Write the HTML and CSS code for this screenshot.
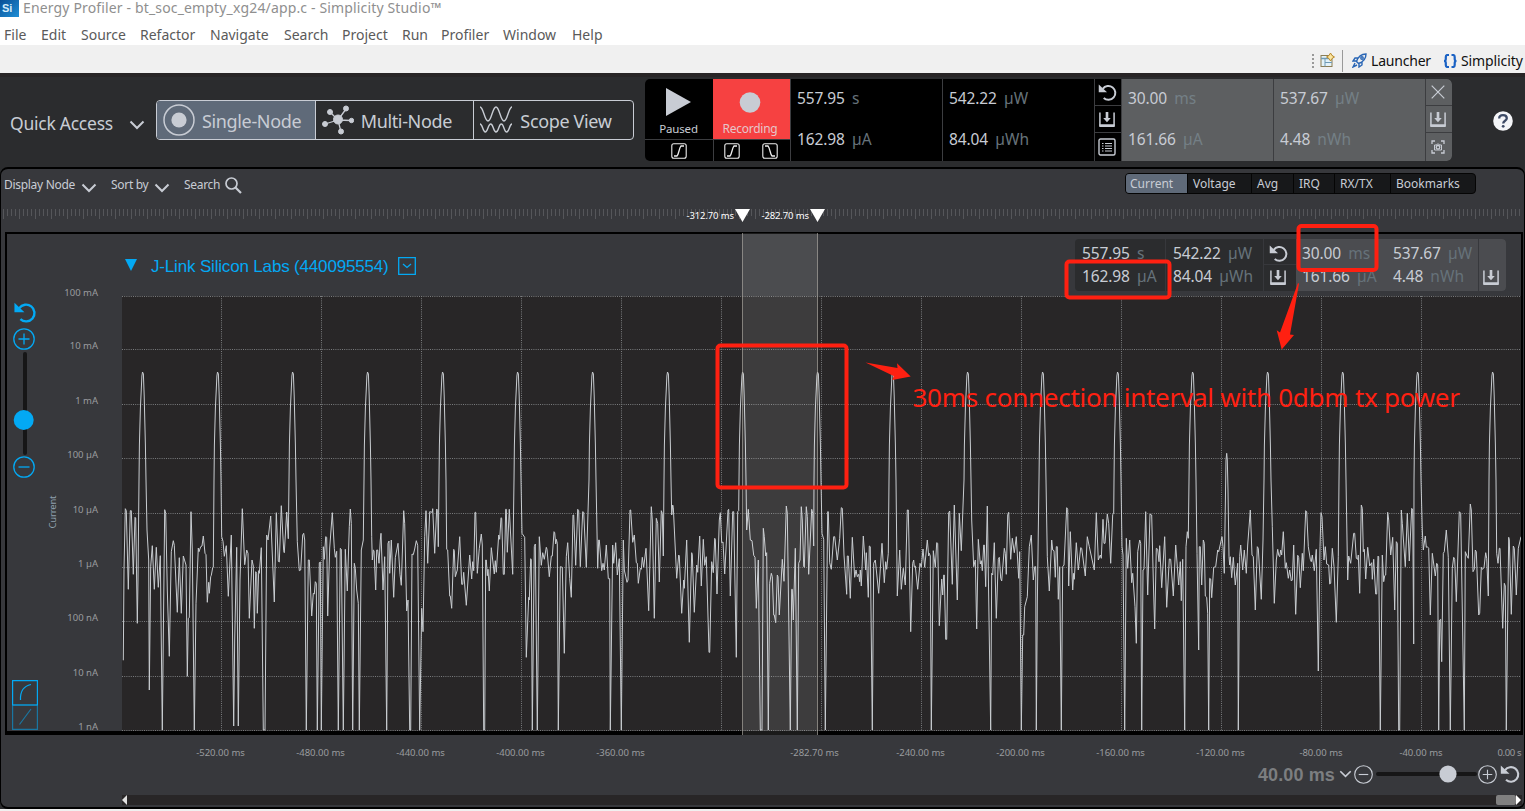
FILE: index.html
```html
<!DOCTYPE html>
<html lang="en">
<head>
<meta charset="utf-8">
<title>Energy Profiler</title>
<link rel="stylesheet" href="styles.css">
</head>
<body>
<svg class="defs" aria-hidden="true">
  <symbol id="chev" viewBox="0 0 16 10"><path d="M1.5 1.5L8 8L14.5 1.5" fill="none" stroke="currentColor" stroke-width="2"/></symbol>
  <symbol id="undo" viewBox="0 0 20 20"><path d="M5 6.200A7.300 7.300 0 1 1 6 15.800" fill="none" stroke="currentColor" stroke-width="2.100"/><path d="M.8 1.500V9.800H9.500Z" fill="currentColor"/></symbol>
  <symbol id="save" viewBox="0 0 18 18"><path d="M1.5 1.5V15.5H16.5V1.5" fill="none" stroke="currentColor" stroke-width="1.6"/><path d="M1 14H17V17H1ZM7.600 1H10.400V7.500H13L9 12L5 7.500H7.600Z" fill="currentColor"/></symbol>
  <symbol id="list" viewBox="0 0 18 18"><rect x="1" y="1" width="16" height="16" rx="1.5" fill="none" stroke="currentColor" stroke-width="1.4"/><path d="M4 5.5H5.5M4 8H5.5M4 10.5H5.5M4 13H5.5M7 5.5H14M7 8H14M7 10.5H14M7 13H14" stroke="currentColor" stroke-width="1.1"/></symbol>
  <symbol id="rise" viewBox="0 0 16 16"><rect x=".8" y=".8" width="14.4" height="14.4" rx="2" fill="none" stroke="currentColor" stroke-width="1.1"/><path d="M3 13H6C8 11 8 5 10 3H13" fill="none" stroke="currentColor" stroke-width="1.3"/></symbol>
  <symbol id="fall" viewBox="0 0 16 16"><rect x=".8" y=".8" width="14.4" height="14.4" rx="2" fill="none" stroke="currentColor" stroke-width="1.1"/><path d="M3 3H6C8 5 8 11 10 13H13" fill="none" stroke="currentColor" stroke-width="1.3"/></symbol>
  <symbol id="plus" viewBox="0 0 22 22"><circle cx="11" cy="11" r="10.2" fill="none" stroke="currentColor" stroke-width="1.3"/><path d="M5.5 11H16.5M11 5.5V16.5" stroke="currentColor" stroke-width="1.3"/></symbol>
  <symbol id="minus" viewBox="0 0 22 22"><circle cx="11" cy="11" r="10.2" fill="none" stroke="currentColor" stroke-width="1.3"/><path d="M5.5 11H16.5" stroke="currentColor" stroke-width="1.3"/></symbol>
</svg>

<header class="titlebar">
  <svg class="logo" width="19" height="17" viewBox="0 0 19 17"><defs><linearGradient id="lg" x2="1" y2="1"><stop offset="0" stop-color="#0a4f96"/><stop offset="1" stop-color="#1f8fd6"/></linearGradient></defs><path d="M0 0H19V17H0Z" fill="url(#lg)"/><text x="2" y="12" class="logo-text">Si</text></svg>
  <span class="app-title">Energy Profiler - bt_soc_empty_xg24/app.c - Simplicity Studio™</span>
</header>
<nav class="menu">
  <span class="m1">File</span><span class="m2">Edit</span><span class="m3">Source</span><span class="m4">Refactor</span><span class="m5">Navigate</span><span class="m6">Search</span><span class="m7">Project</span><span class="m8">Run</span><span class="m9">Profiler</span><span class="m10">Window</span><span class="m11">Help</span>
</nav>
<div class="perspectives">
  <svg width="4" height="16" viewBox="0 0 4 16"><path d="M2 1V16" stroke="#999" stroke-width="2" stroke-dasharray="2 2"/></svg>
  <svg class="persp-icon" width="15" height="15" viewBox="0 0 15 15"><rect x="1" y="2.500" width="11" height="11" fill="#e3f2f8" stroke="#8a7d55"/><path d="M1 5.500H12" stroke="#6f9ab5" stroke-width="1.500"/><path d="M5 5.500V13.500M5 9.500H12" stroke="#6f9ab5"/><path d="M10.500 0L12 2.500L14.500 4L12 5.500L10.500 8L9 5.500L6.500 4L9 2.500Z" fill="#fbe6a2" stroke="#b8892a" stroke-width="1"/></svg>
  <i class="vsep"></i>
  <svg class="rocket" width="15" height="15" viewBox="0 0 15 15" fill="none" stroke="#2a66b5" stroke-width="1.4"><path d="M14 1C9 1 6 4 4.5 8.5L6.5 10.5C11 9 14 6 14 1ZM6 5H3L1 8H4.5M10 9V12L7 14V10.5"/><circle cx="10" cy="5" r="1.2"/><path d="M3 10L1 14L5 12"/></svg>
  <span class="launcher">Launcher</span>
  <svg class="braces" width="16" height="14" viewBox="0 0 16 14" fill="none" stroke="#1b62c4" stroke-width="2.200"><path d="M7 1H5.500Q3.800 1 3.800 3V5Q3.800 7 2 7Q3.800 7 3.800 9V11Q3.800 13 5.500 13H7M9.500 1H11Q12.700 1 12.700 3V5Q12.700 7 14.500 7Q12.700 7 12.700 9V11Q12.700 13 11 13H9.500"/></svg>
  <span class="simplicity">Simplicity</span>
</div>

<section class="top">
  <span class="quick">Quick Access</span>
  <svg class="quick-chev" width="16" height="10"><use href="#chev"/></svg>
  <div class="modes">
    <div class="mode active">
      <svg width="32" height="32" viewBox="0 0 32 32"><circle cx="16" cy="16" r="15" fill="none" stroke="#c8ccd4" stroke-width="1.5"/><circle cx="16" cy="16" r="7.6" fill="#c8ccd4"/></svg><span class="single">Single-Node</span>
    </div>
    <div class="mode">
      <svg width="32" height="32" viewBox="0 0 32 32" fill="#c8ccd4" stroke="#c8ccd4"><path d="M16 16L8 8M16 16L24 5M16 16L3 20M16 16L29 16.500M16 16L19 28" stroke-width="1.3"/><circle cx="16" cy="15.500" r="4.500"/><circle cx="8" cy="8" r="2.500"/><circle cx="24" cy="4.500" r="2.500"/><circle cx="3" cy="20" r="2.500"/><circle cx="29.500" cy="16.500" r="2.200"/><circle cx="19" cy="27.500" r="2.500"/></svg><span class="multi">Multi-Node</span>
    </div>
    <div class="mode">
      <svg width="34" height="32" viewBox="0 0 34 32" fill="none" stroke="#c8ccd4" stroke-width="1.4"><path d="M1 3C4.500 3 5.500 17 9 17S13.500 3 17 3S21.500 17 25 17S29.500 3 33 3M1 20C3.700 20 3.700 28 6.300 28S9 20 11.700 20S14.300 28 17 28S19.700 20 22.300 20S25 28 27.700 28S30.300 20 33 20"/></svg><span class="scope">Scope View</span>
    </div>
  </div>
  <div class="dash">
    <div class="ctl paused"><div class="ctl-main"><svg width="26" height="28" viewBox="0 0 26 28"><path d="M0 0L25 14L0 28Z" fill="#c8ccd4"/></svg><span>Paused</span></div><div class="ctl-sub"><svg width="16" height="16"><use href="#rise"/></svg></div></div>
    <div class="ctl rec"><div class="ctl-main"><svg width="22" height="28" viewBox="0 0 22 28"><circle cx="11" cy="14.500" r="10.300" fill="#c8ccd4"/></svg><span>Recording</span></div><div class="ctl-sub"><svg width="16" height="16"><use href="#rise"/></svg><svg width="16" height="16"><use href="#fall"/></svg></div></div>
    <div class="metric"><p>557.95<em>s</em></p><p>162.98<em>µA</em></p></div>
    <div class="metric"><p>542.22<em>µW</em></p><p>84.04<em>µWh</em></p></div>
    <div class="icons"><b><svg width="19" height="19"><use href="#undo"/></svg></b><b><svg width="18" height="17"><use href="#save"/></svg></b><b><svg width="18" height="18"><use href="#list"/></svg></b></div>
    <div class="metric grey"><p>30.00<em>ms</em></p><p>161.66<em>µA</em></p></div>
    <div class="metric grey"><p>537.67<em>µW</em></p><p>4.48<em>nWh</em></p></div>
    <div class="icons grey"><b><svg width="14" height="14" viewBox="0 0 14 14"><path d="M.7.7L13.300 13.300M13.300.7L.7 13.300" stroke="#c8ccd4" stroke-width="1.200"/></svg></b><b><svg width="18" height="17"><use href="#save"/></svg></b><b><svg width="14" height="14" viewBox="0 0 14 14" fill="none" stroke="#c8ccd4" stroke-width="1.300"><path d="M1 4V1H4M10 1H13V4M13 10V13H10M4 13H1V10"/><circle cx="7" cy="7.300" r="1.800"/><path d="M3.500 10V5H5.500L6.300 4H7.700L8.500 5H10.500V10Z" stroke-width="1"/></svg></b></div>
  </div>
  <svg class="help" width="20" height="20" viewBox="0 0 20 20"><circle cx="10" cy="10" r="9.800" fill="#f4f5f8"/><path d="M6.200 7.500C6.200 2.800 13.800 3 13.800 7.300C13.800 9.800 10.200 9.800 10.200 12.500" fill="none" stroke="#3d4a66" stroke-width="2.300"/><circle cx="10.200" cy="15.300" r="1.400" fill="#3d4a66"/></svg>
</section>

<main class="panel">
  <div class="filters">
    <span class="dn">Display Node</span><svg class="fc" width="16" height="10"><use href="#chev"/></svg>
    <span class="sb">Sort by</span><svg class="fc" width="16" height="10"><use href="#chev"/></svg>
    <span class="sr">Search</span><svg class="mag" width="17" height="17" viewBox="0 0 17 17" fill="none" stroke="#c8ccd4" stroke-width="1.700"><circle cx="6.500" cy="6.500" r="5.500"/><path d="M10.500 10.500L16 16" stroke-width="2.200"/></svg>
    <div class="tabs"><span class="on">Current</span><span>Voltage</span><span>Avg</span><span>IRQ</span><span>RX/TX</span><span>Bookmarks</span></div>
  </div>
  <svg class="ruler" width="1523" height="36" viewBox="1 196 1523 36">
    <path id="ticks" stroke="#55565a"/>
    <g class="marks"><text x="686.500" y="219" textLength="47.500">-312.70 ms</text><text x="761.500" y="219" textLength="47.500">-282.70 ms</text><path d="M735 209H750L742.500 222ZM810 209H825L817.500 222Z"/></g>
  </svg>
  <div class="frame">
    <div class="frame-head">
      <svg class="tri" width="12" height="12" viewBox="0 0 12 12"><path d="M0 0H12L6 12Z" fill="#03a9f4"/></svg>
      <span class="device">J-Link Silicon Labs (440095554)</span>
      <svg width="18" height="18" viewBox="0 0 18 18" fill="none" stroke="#03a9f4" stroke-width="1.300"><path d="M.7.7H17.300V17.300H.7ZM5 7L9 10.500L13 7"/></svg>
      <div class="mini">
        <div class="mm a"><p>557.95<em>s</em></p><p>162.98<em>µA</em></p></div>
        <div class="mm b"><p>542.22<em>µW</em></p><p>84.04<em>µWh</em></p></div>
        <div class="mi"><b><svg width="19" height="19"><use href="#undo"/></svg></b><b><svg width="18" height="17"><use href="#save"/></svg></b></div>
        <div class="mm c"><p>30.00<em>ms</em></p><p>161.66<em>µA</em></p></div>
        <div class="mm d"><p>537.67<em>µW</em></p><p>4.48<em>nWh</em></p></div>
        <div class="mi e"><b></b><b><svg width="18" height="17"><use href="#save"/></svg></b></div>
      </div>
    </div>
    <div class="frame-body">
      <div class="zoomer">
        <svg width="24" height="23"><use href="#undo"/></svg>
        <svg class="zp" width="22" height="22"><use href="#plus"/></svg>
        <svg width="22" height="106" viewBox="0 0 22 106"><path d="M12 4V103" stroke="#161617" stroke-width="4" stroke-linecap="round"/><circle cx="10.700" cy="70" r="10" fill="#03a9f4"/></svg>
        <svg width="22" height="22"><use href="#minus"/></svg>
        <svg class="scale" width="26" height="50" viewBox="0 0 26 50" fill="none" stroke="#03a9f4" stroke-width="1.200"><path d="M.6 25H25.400V49.400H.6ZM7.500 44.500L19 29" opacity=".55"/><path d="M.6.6H25.400V25H.6ZM8.500 20C8 10 12 6 19 4.500"/></svg>
      </div>
      <svg class="yaxis" width="84" height="435" viewBox="38 296 84 435">
        <g text-anchor="end"><text x="98" y="296">100 mA</text><text x="98" y="349">10 mA</text><text x="98" y="404">1 mA</text><text x="98" y="458">100 µA</text><text x="98" y="513">10 µA</text><text x="98" y="567">1 µA</text><text x="98" y="621">100 nA</text><text x="98" y="676">10 nA</text><text x="98" y="730">1 nA</text></g>
        <text class="cur" transform="translate(55.500 528.500) rotate(-90)" textLength="33">Current</text>
      </svg>
      <svg class="plot" width="1399" height="435" viewBox="122 296 1399 435">
        <path id="grid" stroke="#7a7c7e" stroke-dasharray="1 1.200"/>
        <path id="trace" fill="none" stroke="#c8ccd0" stroke-linejoin="round"/>
      </svg>
    </div>
  </div>
  <svg class="xaxis" width="1521" height="28" viewBox="1 735 1521 28">
    <g text-anchor="middle"><text x="220.500" y="756">-520.00 ms</text><text x="320.500" y="756">-480.00 ms</text><text x="420.500" y="756">-440.00 ms</text><text x="520.500" y="756">-400.00 ms</text><text x="620.500" y="756">-360.00 ms</text><text x="814.500" y="756">-282.70 ms</text><text x="920.500" y="756">-240.00 ms</text><text x="1020.500" y="756">-200.00 ms</text><text x="1120.500" y="756">-160.00 ms</text><text x="1220.500" y="756">-120.00 ms</text><text x="1321" y="756">-80.00 ms</text><text x="1421" y="756">-40.00 ms</text><text x="1509.500" y="756" textLength="24">0.00 s</text></g>
  </svg>
  <div class="time">
    <span>40.00 ms</span>
    <svg class="tc" width="13" height="8"><use href="#chev"/></svg>
    <svg width="19" height="19"><use href="#minus"/></svg>
    <svg width="105" height="20" viewBox="0 0 105 20"><path d="M5 10H102" stroke="#161617" stroke-width="4" stroke-linecap="round"/><circle cx="75" cy="10" r="8.600" fill="#c8ccd4"/></svg>
    <svg width="19" height="19"><use href="#plus"/></svg>
    <svg class="tu" width="20" height="20"><use href="#undo"/></svg>
  </div>
  <div class="scroll"><svg width="5" height="10"><path d="M5 0V10L0 5Z" fill="#e0e0e0"/></svg><i></i><svg width="5" height="10"><path d="M0 0V10L5 5Z" fill="#fff"/></svg></div>
</main>
<footer class="edge"></footer>

<svg class="overlay" width="1525" height="811" viewBox="0 0 1525 811">
  <path d="M742 233H818V735H742Z" fill="#fff" opacity=".1"/>
  <path d="M742.500 233V735M817.500 233V735" stroke="#aaa69f" opacity=".65"/>
  <g fill="none" stroke="#ff2011" stroke-width="4"><rect x="717.500" y="345.500" width="129" height="142" rx="3"/><rect x="1066.500" y="261.500" width="103" height="36" rx="3"/><rect x="1298.500" y="226" width="78" height="44" rx="3"/></g>
  <path d="M865.500 362.500L897.500 368L897 363.300L910.700 376.500L892.300 380L893.700 376ZM1298 283L1299 283.700L1290 334.500L1294 335L1281.700 349.500L1276.700 330.300L1280 332.500Z" fill="#ff2011"/>
  <text class="note" x="912.500" y="407" textLength="547.500">30ms connection interval with 0dbm tx power</text>
</svg>
<script src="chart.js"></script>
</body>
</html>
```
FILE: styles.css
```css
* { box-sizing: border-box; }
body { margin: 0; width: 1525px; height: 811px; overflow: hidden; background: #2b2c2e; position: relative; font-family: "Noto Sans", sans-serif; color: #c8ccd4; }
svg { display: block; flex: none; }
p { margin: 0; }
em { font-style: normal; }
span { white-space: pre; }
.defs { position: absolute; width: 0; height: 0; }

.titlebar { height: 20px; background: #fff; display: flex; align-items: flex-start; }
.logo-text { font: bold 11px "Liberation Sans", sans-serif; fill: #d5ecfb; }
.app-title { margin-left: 4px; font-size: 14px; line-height: 16px; color: #8f8f8f; letter-spacing: .15px; }
.menu { height: 25px; background: #fff; position: relative; display: flex; padding-left: 4px; color: #5a5a5a; font-size: 14px; line-height: 29px; }
.menu span { flex: none; }
.m1 { width: 37px; } .m2 { width: 40px; } .m3 { width: 59px; } .m4 { width: 70px; } .m5 { width: 74px; } .m6 { width: 58px; } .m7 { width: 60px; } .m8 { width: 39px; } .m9 { width: 62px; } .m10 { width: 69px; }
.perspectives { height: 28px; background: #f0f0f0; display: flex; align-items: center; padding: 3px 0 0 1311px; color: #111; font-size: 14px; overflow: hidden; }
.persp-icon { margin-left: 5px; }
.vsep { width: 1px; height: 22px; background: #999; margin: 0 9px 0 7px; flex: none; }
.launcher { width: 71px; margin-left: 4px; flex: none; letter-spacing: -.2px; }
.braces { margin-right: 3px; }
.simplicity { letter-spacing: -.1px; }

.top { height: 94px; border-top: 4px solid #282526; display: flex; align-items: flex-start; padding-left: 10px; }
.quick { width: 119px; font-size: 17.500px; line-height: 24px; margin-top: 34px; letter-spacing: -.25px; }
.quick-chev { margin-top: 43px; }
.modes { display: flex; width: 478px; height: 40px; margin: 23px 0 0 11px; border: 1px solid #c8ccd4; border-radius: 4px; overflow: hidden; }
.mode { width: 159px; display: flex; align-items: center; padding-left: 6px; border-right: 1px solid #c8ccd4; font-size: 18px; }
.mode:last-child { border: 0; padding-left: 5px; }
.mode span { margin-left: 7px; margin-top: 1px; letter-spacing: -.35px; }
.active { background: #5f6a79; }
.dash { display: flex; width: 807px; height: 82px; margin: 2px 0 0 11px; background: #000; border-radius: 5px; overflow: hidden; }
.ctl { width: 68px; font-size: 12px; }
.rec { width: 77px; }
.ctl-main { height: 61px; display: flex; flex-direction: column; align-items: center; padding-top: 9px; line-height: 18px; border-bottom: 1px solid #3c3d40; }
.ctl-main span { margin-top: 4px; }
.rec .ctl-main { background: #f64141; padding-right: 3px; }
.rec .ctl-main span { color: #e6c5ca; letter-spacing: -.25px; }
.paused .ctl-main { padding-right: 1px; }
.paused .ctl-main span { font-size: 11.500px; letter-spacing: -.15px; }
.ctl-sub { height: 21px; display: flex; justify-content: center; gap: 22px; align-items: center; color: #eee; }
.rec .ctl-sub { border-left: 1px solid #3c3d40; padding-right: 3px; }
.metric { width: 152px; border-left: 1px solid #3c3d40; padding: 8px 0 0 6px; font-size: 15.500px; line-height: 22px; letter-spacing: -.1px; }
.metric p + p { margin-top: 19px; }
.metric em, .mm em { margin-left: 7px; color: #66727a; letter-spacing: .1px; }
.metric.grey, .icons.grey { background: #5d5f61; }
.metric.grey em { color: #747f86; }
.icons { width: 27px; border-left: 1px solid #3c3d40; }
.icons b { height: 27px; display: flex; align-items: center; justify-content: center; border-bottom: 1px solid #3c3d40; padding-right: 2px; }
.icons b:last-child { border: 0; }
.help { margin: 34px 0 0 41px; }

.panel { height: 642px; background: #37383c; border: 2px solid #000; border-left-width: 1px; border-right-width: 1px; border-radius: 8px; }
.edge { height: 2px; background: #f0f0f0; }
.filters { height: 27px; display: flex; padding: 4px 0 0 3px; font-size: 12px; line-height: 23px; letter-spacing: -.3px; }
.dn { width: 77px; } .sb { width: 43px; } .sr { width: 41px; }
.fc { margin: 10px 14px 0 0; }
.mag { margin-top: 4px; }
.tabs { display: flex; height: 21px; margin: 0 0 0 883px; border: 1px solid #050505; border-radius: 4px; background: #17181a; line-height: 19px; overflow: hidden; letter-spacing: 0; }
.tabs span { padding-left: 5px; border-right: 1px solid #050505; width: 64px; }
.tabs .on { background: #5f6a79; width: 62px; padding-left: 4px; }
.tabs span:nth-child(3) { width: 42px; } .tabs span:nth-child(4) { width: 41px; } .tabs span:nth-child(5) { width: 56px; } .tabs span:nth-child(6) { width: 84px; border: 0; }
.marks { fill: #fff; font: 9.500px "Noto Sans", sans-serif; }
.frame { width: 1518px; height: 503px; margin-left: 4px; border: 2px solid #000; border-bottom-width: 4px; }
.frame-head { height: 62px; display: flex; padding-left: 118px; align-items: flex-start; }
.tri { margin-top: 25px; }
.device { width: 247px; margin: 22px 0 0 14px; font: 17px/21px "Liberation Sans", sans-serif; color: #03a9f4; letter-spacing: -.17px; }
.frame-head > svg:nth-of-type(2) { margin-top: 23px; }
.mini { display: flex; width: 431px; height: 52px; margin: 5px 0 0 659px; background: #2b2c2e; border-radius: 4px; overflow: hidden; font-size: 15.500px; line-height: 23px; letter-spacing: -.1px; }
.mm { width: 90px; padding: 3px 0 0 7px; white-space: nowrap; }
.mm.b { width: 98px; border-left: 1px solid #37383c; }
.mi { width: 33px; border-left: 1px solid #37383c; }
.mi b { display: flex; height: 26px; align-items: center; justify-content: center; padding: 3px 4px 0 0; }
.mi b + b { padding-top: 0; padding-bottom: 2px; }
.mi b:first-child { border-bottom: 1px solid #37383c; }
.mm.c { background: #4b4c50; width: 91px; padding-left: 6px; }
.mm.d { background: #4b4c50; width: 91px; padding-left: 6px; }
.mi.e { background: #4b4c50; width: 28px; }
.mi.e b:first-child { border: 0; }
.frame-body { display: flex; height: 435px; }
.zoomer { width: 31px; padding: 5px 0 0 6px; color: #03a9f4; }
.zp { margin-top: 4px; }
.scale { margin: 202px 0 0 -1px; }
.yaxis, .xaxis { overflow: visible; font: 9.500px "Noto Sans", sans-serif; fill: #9a9c9f; }
.cur { fill: #8fa0ae; }
.plot { background: #282627; }
.time { height: 22px; display: flex; align-items: center; padding-left: 1257px; }
.time span { width: 81px; margin-top: 2px; font: bold 18px/22px "Liberation Sans", sans-serif; color: #7c7e80; letter-spacing: .1px; }
.tc { margin-right: 2px; }
.tu { margin-left: 3px; }
.scroll { height: 10px; width: 1400px; margin: 10px 0 0 121px; background: #282627; display: flex; }
.scroll i { width: 20px; margin-left: 1369px; background: #808080; border-radius: 2px; }
.overlay { position: absolute; left: 0; top: 0; pointer-events: none; }
.note { font: 26px "Noto Sans", sans-serif; fill: #ff2011; }
```
FILE: chart.js
```js
// Samples are stored in thirds of a pixel, in blocks: [x origin, points].
// "P x" stands for one radio event, drawn with the shared pulse shape.
const blocks = [
  [0, `370,541 372,268 376,86 379,92 385,328 391,92 394,92 400,283 405,112 407,114 412,430 414,300 P428 441,150 446,240 448,630 452,260 457,197 463,328 469,202 475,322 481,227 487,750 494,89 497,100 502,330 508,529 514,215 520,182 523,196 532,397 538,233 544,400 550,228 558,255 562,589 565,415 568,413 573,95 577,210 583,750 588,370 595,204 597,215 602,200 606,198 610,168 615,220 618,224 622,367 626,307 628,340 632,290 634,286 638,263 640,262 P653 665,170 669,184 673,229 679,197 685,349 694,165 701,738 704,480 710,202 715,738 720,300 727,86 734,254 740,210 744,220 748,415 756,240 760,258 763,445 767,275 770,280 772,400 776,272 778,280 784,203 790,750 795,750 800,165 804,180 812,108 823,366 829,98 835,244 838,246 844,77 851,212 853,218 860,96 865,176 P878 892,185 898,272 902,270 908,165 911,160 914,180 919,750 925,240 928,240 935,408 940,340 943,342 946,305 949,310 952,750 958,248 961,246 964,750 970,200 973,238 977,170 980,172 983,408 989,204 997,98 1003,205 1006,232 1010,214 1015,750 1021,205 1024,208 1030,750 1036,208 1042,333 1048,140 1051,87 1054,130 1058,750 1063,250 1066,265 1070,330 1075,370 1078,750 1084,210 1090,180 P1103 1115,170 1117,240 1120,210 1122,212 1127,330 1130,210 1133,210 1137,250 1141,180 1143,160 1149,330 1154,230 1160,750 1164,190 1167,183 1169,280 1174,180 1181,352 1186,233 1194,190`],
  [400, `0,283 4,316 11,92 14,130 20,393 24,360 29,750 32,750 36,222 40,224 44,207 49,182 53,196 59,750 65,385 69,455 74,170 78,92 83,250 89,95 97,97 98,86 104,220 110,87 113,92 115,200 P128 140,208 143,210 149,348 151,348 155,385 161,208 163,212 166,290 172,270 179,170 185,313 188,313 191,277 199,376 209,225 215,297 218,245 221,272 225,97 227,97 232,280 238,205 244,162 247,195 251,750 254,750 257,240 259,240 262,287 264,268 268,333 274,203 278,240 283,282 286,242 289,277 296,165 299,178 303,113 305,115 310,283 313,283 317,88 319,88 322,217 328,88 338,283 P353 366,160 374,172 379,532 386,352 388,360 392,236 394,240 397,750 403,200 406,192 412,750 418,170 424,256 428,218 433,238 439,202 441,208 448,290 454,228 457,228 462,155 464,158 467,192 469,178 472,190 475,750 481,260 487,262 493,520 499,230 503,188 509,295 514,352 519,105 521,105 527,256 533,88 536,92 541,260 548,95 551,97 559,262 P578 593,265 596,180 598,180 605,272 609,250 613,270 619,195 625,296 629,296 631,750 638,195 641,250 647,188 652,285 658,236 664,750 670,180 673,270 681,307 684,300 690,90 692,90 698,187 703,165 709,248 712,250 715,310 721,265 724,268 727,232 731,262 738,205 746,392 754,80 757,120 763,415 769,115 773,130 778,306 784,92 787,100 790,228 P803 815,105 818,75 820,82 830,295 836,225 838,228 845,400 851,300 853,325 860,180 868,487 875,218 877,225 883,397 890,255 893,277 899,168 904,318 910,178 914,256 919,230 927,517 929,517 935,245 940,278 944,175 946,178 951,342 958,120 961,98 965,188 969,186 974,282 984,90 986,88 991,348 998,95 1001,95 1009,532 1013,95 1016,92 P1028 1040,150 1045,88 1051,180 1056,182 1061,226 1065,232 1069,385 1075,240 1081,750 1086,750 1090,145 1093,170 1097,228 1100,218 1105,750 1109,310 1114,280 1117,290 1121,405 1123,405 1127,428 1132,285 1134,290 1138,405 1147,238 1152,304 1159,78 1162,100 1171,750 1175,328 1177,328 1180,420 1186,205 1192,750 1196,250`],
  [800, `0,240 4,80 7,120 11,258 13,262 19,80 22,110 26,283 35,88 38,100 41,198 P53 66,160 71,178 76,750 83,95 85,95 89,248 94,268 101,170 104,170 112,240 119,175 124,83 127,85 132,225 140,343 142,228 145,228 151,355 157,172 164,292 168,270 172,290 176,283 179,305 181,270 184,318 190,168 197,270 199,218 205,352 208,198 211,200 217,750 221,250 226,240 236,340 246,190 253,308 257,245 260,268 265,220 P278 292,348 299,210 304,328 310,265 316,315 322,90 325,90 332,455 338,250 341,240 343,260 346,258 353,328 360,250 364,262 369,207 374,262 382,180 386,228 388,220 391,228 394,750 400,212 406,262 410,188 413,190 418,437 425,297 428,345 431,285 433,285 437,478 440,478 446,98 449,93 457,313 463,75 472,360 478,100 484,212 P503 515,120 521,260 526,240 530,447 535,178 541,252 544,242 547,272 551,195 553,195 557,320 562,78 572,750 575,280 578,285 583,188 589,415 595,238 598,232 602,295 605,303 613,205 616,220 619,283 623,105 626,97 632,238 637,175 643,218 649,170 656,295 659,215 664,750 668,465 671,465 674,380 682,350 688,200 694,165 700,300 704,260 707,260 709,750 712,375 P728 742,230 748,333 755,180 758,210 762,212 766,292 769,200 772,200 775,358 779,260 784,750 788,260 792,255 800,83 803,88 806,318 811,155 818,330 821,280 823,298 829,188 835,270 842,203 845,205 856,288 862,170 868,200 883,270 889,98 895,240 901,225 904,235 909,118 912,190 915,190 922,102 926,130 932,250 938,104 941,100 P953 966,200 969,225 974,750 979,175 983,265 989,180 995,308 998,280 1005,380 1009,490 1013,215 1019,180 1022,190 1025,750 1029,270 1032,268 1037,95 1043,345 1050,102 1055,105 1060,300 1064,447 1069,205 1073,208 1077,245 1079,197 1085,323 1094,170 1100,382 1108,237 1112,238 1120,348 1127,195 1136,315 1141,245 1144,362 1148,238 1154,750 1158,200 1162,155 1165,175`],
  [1125, `P203 216,220 221,510 223,200 226,200 230,315 235,180 238,190 241,348 245,352 248,400 251,750 254,295 257,297 260,353 266,262 272,260 278,210 281,215 291,170 294,200 298,280 303,-60 305,-80 307,-60 309,30 312,230 314,255 316,230 320,293 325,232 331,315 338,250 340,750 344,230 347,195 353,270 358,210 364,280 368,195 376,90 381,225 385,230 391,390 397,200 400,205 409,358 414,180 P428 442,140 448,370 454,240 458,208 461,225 464,230 467,210 470,225 475,155 481,265 484,248 490,295 494,270 499,303 502,300 506,195 512,403 518,226 521,232 526,323 532,220 535,272 542,92 545,95 550,200 556,238 559,245 562,225 568,272 574,208 580,573 585,200 588,98 591,110 597,240 601,200 605,252 611,255 614,312 617,310 622,205 627,260 634,427 640,230 P653 668,300 671,228 677,250 686,160 689,160 694,235 698,238 700,225 704,340 709,75 712,85 715,215 718,208 722,297 728,202 734,258 740,248 742,298 746,238 752,342 755,342 759,228 761,230 766,750 772,225 776,305 779,287 782,285 788,97 791,120 797,225 803,172 809,390 814,185 817,190 821,750 824,750 829,90 832,130 841,260 847,100 853,243 860,85 863,90 866,492 P878 892,150 895,210 901,168 904,202 907,200 911,205 916,405 922,220 931,288 935,250 938,255 941,750 944,420 947,418 950,545 955,220 958,215 964,150 970,232 976,750 982,265 986,232 989,238 994,365 1003,95 1007,100 1018,750 1021,215 1026,228 1030,235 1036,72 1039,90 1044,275 1048,268 1051,210 1054,215 1061,405 1064,400 1069,262 1072,268 1077,263 1082,218 1085,235 1090,348 P1103 1115,220 1119,250 1123,205 1125,205 1133,445 1138,310 1141,318 1144,750 1151,172 1153,180 1159,403 1165,198 1168,205 1174,345 1180,205 1188,170`]
];
const pulse = [[-3.7, 480], [-3.3, 445], [-2.3, 408], [-.8, 376], [-.2, 372], [.7, 374], [1.5, 396], [2.7, 445], [3.3, 480]];
const pts = [];
for (const [ox, data] of blocks) {
  for (const t of data.split(' ')) {
    if (t[0] === 'P') {
      const c = ox + t.slice(1) / 3;
      pulse.forEach(([dx, y]) => pts.push((c + dx).toFixed(1) + ',' + y));
    } else {
      const [x, y] = t.split(',').map(Number);
      pts.push((ox + x / 3).toFixed(1) + ',' + (480 + y / 3).toFixed(1));
    }
  }
}
document.getElementById('trace').setAttribute('d', 'M' + pts.join('L'));

let grid = '';
for (const y of [296.5, 349.5, 404.5, 458.5, 513.5, 567.5, 621.5, 676.5, 730.5]) grid += `M122 ${y}H1521`;
for (let x = 221.5; x < 1521; x += 100) grid += `M${x} 296V731`;
document.getElementById('grid').setAttribute('d', grid);

let ticks = '';
for (let i = 0; i < 380; i++) ticks += `M${3.5 + i * 4} 209V${i % 4 ? 216 : 219}`;
document.getElementById('ticks').setAttribute('d', ticks);
```
